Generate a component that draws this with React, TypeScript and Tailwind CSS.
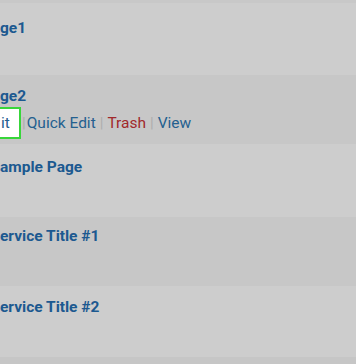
import React from "react";

const font = { fontFamily: "Roboto, 'Noto Sans', 'Liberation Sans', sans-serif" };

function Title({ children }: { children: React.ReactNode }) {
  return (
    <div className="text-[15.5px] leading-[20px] font-bold text-[#1c5990] whitespace-nowrap">
      {children}
    </div>
  );
}

function Sep() {
  return <span className="text-[#adadad] text-[15px] mx-[4px]">|</span>;
}

export default function App() {
  return (
    <div className="w-[356px] h-[364px] overflow-hidden bg-[#c7c7c7]" style={font}>
      <div className="h-[3px] bg-[#c8c8c8]" />
      <div className="h-[72px] bg-[#cdcdcd] pt-[15px]">
        <Title>ge1</Title>
      </div>
      <div className="h-[69px] bg-[#c7c7c7] pt-[11px]">
        <Title>ge2</Title>
        <div className="mt-[1px] flex items-center h-[32px] text-[15.5px] leading-[20px] whitespace-nowrap">
          <span className="h-[32px] w-[21px] bg-white border-2 border-l-0 border-[#38d63a] flex items-center pl-[1px] text-[#24608f]">
            it
          </span>
          <span className="text-[#adadad] text-[15px] ml-[1px] mr-[1px]">|</span>
          <span className="text-[#24608f]">Quick Edit</span>
          <Sep />
          <span className="text-[#a1292b]">Trash</span>
          <Sep />
          <span className="text-[#24608f]">View</span>
        </div>
      </div>
      <div className="h-[73px] bg-[#cdcdcd] pt-[13px]">
        <Title>ample Page</Title>
      </div>
      <div className="h-[69px] bg-[#c7c7c7] pt-[9px]">
        <Title>ervice Title #1</Title>
      </div>
      <div className="h-[71px] bg-[#cdcdcd] pt-[11px]">
        <Title>ervice Title #2</Title>
      </div>
      <div className="h-[7px] bg-[#c6c6c6]" />
    </div>
  );
}
